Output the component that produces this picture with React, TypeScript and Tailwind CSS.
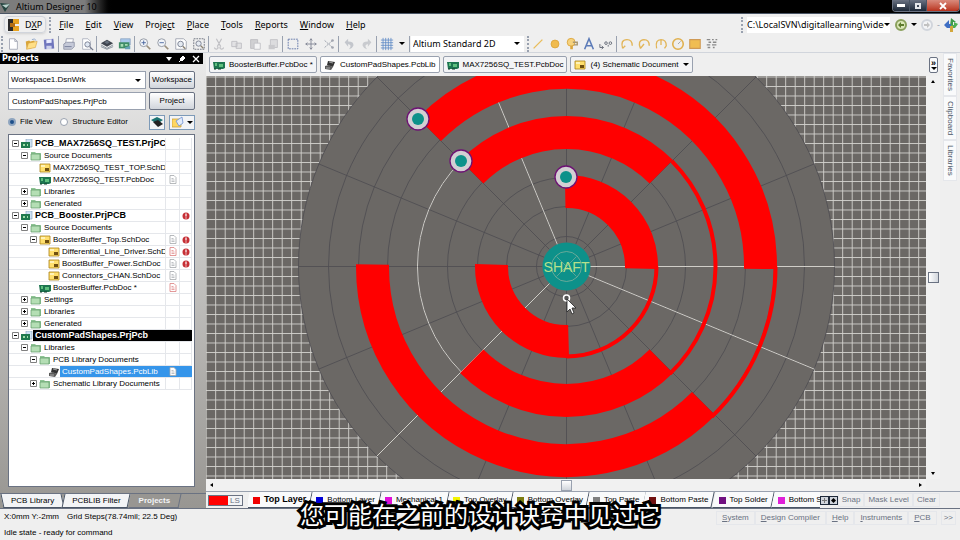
import React from 'react'
import clsx from 'clsx'

type IconName =
  | 'new' | 'open' | 'save' | 'print' | 'preview' | 'layers' | 'board'
  | 'zoomIn' | 'zoomOut' | 'zoomFit' | 'zoomArea'
  | 'cut' | 'copy' | 'paste' | 'stamp'
  | 'marquee' | 'move' | 'clear' | 'undo' | 'redo' | 'grid'
  | 'line' | 'pad' | 'via' | 'text' | 'coord'
  | 'arc1' | 'arc2' | 'arc3' | 'circle' | 'fill' | 'array'

const glyphs: Record<IconName, React.ReactNode> = {
  new: <path d="M4 2h6l3 3v9H4zM10 2v3h3" fill="#fff" stroke="#a3a7b5" />,
  open: (
    <>
      <path d="M2 5l4-1 1 1 5-1v8l-9 2z" fill="#d9a53a" />
      <path d="M5 7l10-2-2 7-10 2z" fill="#ffdf86" stroke="#d9a440" strokeWidth=".7" />
      <path d="M9 3q3-2 5 1" fill="none" stroke="#8aa2c8" />
    </>
  ),
  save: (
    <>
      <path d="M2 3l11-1 1 11-11 1z" fill="#7076bd" />
      <path d="M5 3l6-.5v4L5 7z" fill="#e9ecff" />
      <path d="M5 10h6v4H5z" fill="#cdd1ea" />
    </>
  ),
  print: (
    <>
      <path d="M5 2h8l-1 6H4z" fill="#fff" stroke="#8f94a8" strokeWidth=".8" />
      <path d="M2 8l3-2h9v5l-3 3H2z" fill="#c5c9d8" stroke="#7e8499" strokeWidth=".8" />
      <path d="M3 11h8" stroke="#6f7692" />
    </>
  ),
  preview: (
    <>
      <path d="M3 2h6l3 3v9H3z" fill="#fff" stroke="#9a9fb0" strokeWidth=".8" />
      <circle cx="8.500" cy="8.500" r="3" fill="#dfe7f2" stroke="#73798c" />
      <path d="M11 11l4 4" stroke="#73798c" strokeWidth="1.600" />
    </>
  ),
  layers: (
    <>
      <path d="M1 7l7-4 7 4-7 4z" fill="#3f454f" />
      <path d="M1 9l7 4 7-4M1 11l7 3 7-3" fill="none" stroke="#7f8994" />
      <path d="M5 6l3-2 3 2-3 2z" fill="#67717d" />
    </>
  ),
  board: (
    <>
      <path d="M3 2h11v7H3z" fill="#a9c8ea" stroke="#7894b5" strokeWidth=".7" />
      <path d="M1 6h12v7H1z" fill="#3f8d67" />
      <path d="M3 8h3v3H3zM8 8h3v2H8z" fill="#a7dcb4" />
      <path d="M8 12l6-2v4H8z" fill="#68a3b7" />
    </>
  ),
  zoomIn: (
    <>
      <circle cx="6.500" cy="6.500" r="4.500" fill="#f1f4f8" stroke="#8d929e" />
      <path d="M4 6.500h5M6.500 4v5" stroke="#43609b" />
      <path d="M10 10l4 4" stroke="#9a8f7d" strokeWidth="2" />
    </>
  ),
  zoomOut: (
    <>
      <circle cx="6.500" cy="6.500" r="4.500" fill="#f1f4f8" stroke="#8d929e" />
      <path d="M4 6.500h5" stroke="#43609b" />
      <path d="M10 10l4 4" stroke="#9a8f7d" strokeWidth="2" />
    </>
  ),
  zoomFit: (
    <>
      <path d="M2 2h9l3 3v9H2z" fill="#fff" stroke="#9da1ad" />
      <circle cx="7.500" cy="8" r="3.200" fill="#e5eaf1" stroke="#757c8d" />
      <path d="M10 10.500l3 3" stroke="#8a8170" strokeWidth="1.600" />
    </>
  ),
  zoomArea: (
    <>
      <path d="M2 2h12v12H2z" fill="none" stroke="#666b78" strokeDasharray="2 1" />
      <circle cx="7.500" cy="7.500" r="3" fill="#e5eaf1" stroke="#757c8d" />
      <path d="M10 10l3 3" stroke="#8a8170" strokeWidth="1.600" />
    </>
  ),
  cut: <path d="M5 2l5 9M11 2L6 11M3 12a2 1.500 0 1 0 3-1M10 11a2 1.500 0 1 0 3 1" fill="none" stroke="#bfbfc3" strokeWidth="1.300" />,
  copy: <path d="M2 5h6v6H2zM7 7h6v6H7z" fill="#e2e2e4" stroke="#bdbdc2" />,
  paste: (
    <>
      <path d="M3 3h8v10H3z" fill="#d0d0d3" stroke="#bbbbc0" />
      <path d="M7 7h7v7H7z" fill="#f4f4f5" stroke="#c0c0c5" />
    </>
  ),
  stamp: (
    <>
      <path d="M5 3h8v9H5z" fill="#dcdcde" stroke="#c0c0c5" />
      <path d="M3 9h7v5H3z" fill="#c9c9cc" />
    </>
  ),
  marquee: <path d="M2.500 2.500h11v11h-11z" fill="none" stroke="#5a70a5" strokeDasharray="2 1" />,
  move: <path d="M8 2v12M2 8h12M6.500 4L8 2l1.500 2M6.500 12L8 14l1.500-2M4 6.500L2 8l2 1.500M12 6.500L14 8l-2 1.500" fill="none" stroke="#7d8190" />,
  clear: (
    <>
      <path d="M3 4l9 8M3 12l9-8" stroke="#8d93a0" strokeDasharray="2 1" />
      <circle cx="12" cy="4" r="1.500" fill="#a0a4ae" />
      <circle cx="12" cy="12" r="1.500" fill="#a0a4ae" />
    </>
  ),
  undo: <path d="M3 6l4-4v3q7 0 6 5-1 3-5 4 4-5-1-6v3z" fill="#c3c6cc" />,
  redo: <path d="M13 6L9 2v3q-7 0-6 5 1 3 5 4-4-5 1-6v3z" fill="#c9cbcf" />,
  grid: <path d="M3.500 1v14M6.500 1v14M9.500 1v14M12.500 1v14M1 3.500h14M1 6.500h14M1 9.500h14M1 12.500h14" stroke="#5a87c4" strokeWidth=".9" />,
  line: <path d="M3 13L13 3" stroke="#e9bd5c" strokeWidth="1.600" />,
  pad: <circle cx="8" cy="8" r="4.500" fill="#f0bb4e" stroke="#dba53b" />,
  via: (
    <>
      <circle cx="7" cy="6" r="4.500" fill="#f6d27d" stroke="#dba53b" />
      <path d="M9 6h5v3h-4" fill="none" stroke="#a8966e" strokeWidth="1.600" />
      <path d="M6 10h3v4H6z" fill="#dba53b" />
    </>
  ),
  text: <path d="M3 14L8 2l5 12M5 10h6" fill="none" stroke="#5c7bb8" strokeWidth="1.800" />,
  coord: (
    <>
      <path d="M1 8v4h4M3 10l2 2-2 2" fill="none" stroke="#5c6270" />
      <circle cx="8" cy="7" r="1.500" fill="none" stroke="#5c6270" />
      <circle cx="13" cy="7" r="1.500" fill="none" stroke="#5c6270" />
      <path d="M10.500 9v2" stroke="#5c6270" />
    </>
  ),
  arc1: <path d="M3 13Q0 3 8 3q6 0 6 7M3 13l3-3" fill="none" stroke="#e2b558" strokeWidth="1.600" />,
  arc2: <path d="M4 13Q0 4 8 3q6 0 6 7M4 13l4-5" fill="none" stroke="#e2b558" strokeWidth="1.600" />,
  arc3: <path d="M3 13Q1 3 8 3q6 0 6 7l-2 3M8 3v6" fill="none" stroke="#e2b558" strokeWidth="1.500" />,
  circle: (
    <>
      <circle cx="8" cy="8" r="6" fill="none" stroke="#e0b04e" strokeWidth="1.800" />
      <path d="M8 8l3-3" stroke="#9d9d9d" />
    </>
  ),
  fill: <path d="M2 3h12v10H2z" fill="#f0bd52" stroke="#cf9a55" strokeWidth="1.200" />,
  array: <path d="M2 3h4M8 3h2M12 3h2M4 6h3M9 6h4M2 9h4M8 9h5M3 12h3M9 12h2" stroke="#8a8a8a" strokeWidth="1.600" />,
}

function Icon ({ name }: { name: IconName }) {
  return (
    <svg viewBox="0 0 16 16" className="size-[14px] shrink-0" aria-hidden="true">
      {glyphs[name]}
    </svg>
  )
}

const toolGroups: IconName[][] = [
  ['new', 'open', 'save'],
  ['print', 'preview'],
  ['layers', 'board'],
  ['zoomIn', 'zoomOut', 'zoomFit', 'zoomArea'],
  ['cut', 'copy', 'paste', 'stamp'],
  ['marquee', 'move', 'clear'],
  ['undo', 'redo'],
]

const placeTools: IconName[] = ['line', 'pad', 'via', 'text', 'coord']
const shapeTools: IconName[] = ['arc1', 'arc2', 'arc3', 'circle', 'fill', 'array']

// [before the accelerator, accelerator, after it]
const menus = [
  ['', 'F', 'ile'],
  ['', 'E', 'dit'],
  ['', 'V', 'iew'],
  ['Proje', 'c', 't'],
  ['', 'P', 'lace'],
  ['', 'T', 'ools'],
  ['', 'R', 'eports'],
  ['', 'W', 'indow'],
  ['', 'H', 'elp'],
]

type DocKind = 'project' | 'folder' | 'sch' | 'pcb' | 'lib'

interface TreeRow {
  label: string
  level: number
  kind: DocKind
  open?: boolean
  page?: 'gray' | 'red' | 'white'
  error?: boolean
  active?: boolean
  selected?: boolean
}

const tree: TreeRow[] = [
  { label: 'PCB_MAX7256SQ_TEST.PrjPCB', level: 0, kind: 'project', open: true },
  { label: 'Source Documents', level: 1, kind: 'folder', open: true },
  { label: 'MAX7256SQ_TEST_TOP.SchDoc', level: 2, kind: 'sch' },
  { label: 'MAX7256SQ_TEST.PcbDoc', level: 2, kind: 'pcb', page: 'gray' },
  { label: 'Libraries', level: 1, kind: 'folder', open: false },
  { label: 'Generated', level: 1, kind: 'folder', open: false },
  { label: 'PCB_Booster.PrjPCB', level: 0, kind: 'project', open: true, error: true },
  { label: 'Source Documents', level: 1, kind: 'folder', open: true },
  { label: 'BoosterBuffer_Top.SchDoc', level: 2, kind: 'sch', open: true, page: 'gray', error: true },
  { label: 'Differential_Line_Driver.SchDoc', level: 3, kind: 'sch', page: 'red', error: true },
  { label: 'BoostBuffer_Power.SchDoc', level: 3, kind: 'sch', page: 'gray', error: true },
  { label: 'Connectors_CHAN.SchDoc', level: 3, kind: 'sch', page: 'gray' },
  { label: 'BoosterBuffer.PcbDoc *', level: 2, kind: 'pcb', page: 'red' },
  { label: 'Settings', level: 1, kind: 'folder', open: false },
  { label: 'Libraries', level: 1, kind: 'folder', open: false },
  { label: 'Generated', level: 1, kind: 'folder', open: false },
  { label: 'CustomPadShapes.PrjPcb', level: 0, kind: 'project', open: true, active: true },
  { label: 'Libraries', level: 1, kind: 'folder', open: true },
  { label: 'PCB Library Documents', level: 2, kind: 'folder', open: true },
  { label: 'CustomPadShapes.PcbLib', level: 3, kind: 'lib', page: 'white', selected: true },
  { label: 'Schematic Library Documents', level: 2, kind: 'folder', open: false },
]

const indents = ['pl-[3px]', 'pl-3', 'pl-[21px]', 'pl-[30px]']

const layers = [
  { name: 'Top Layer', swatch: 'bg-[#f00000]', active: true },
  { name: 'Bottom Layer', swatch: 'bg-[#0000d8]' },
  { name: 'Mechanical 1', swatch: 'bg-[#e010d8]' },
  { name: 'Top Overlay', swatch: 'bg-[#f4f400]' },
  { name: 'Bottom Overlay', swatch: 'bg-[#7d7d10]' },
  { name: 'Top Paste', swatch: 'bg-[#808080]' },
  { name: 'Bottom Paste', swatch: 'bg-[#701010]' },
  { name: 'Top Solder', swatch: 'bg-[#701080]' },
  { name: 'Bottom Solder', swatch: 'bg-[#e020d8]' },
]

function DocIcon ({ kind }: { kind: DocKind }) {
  return (
    <svg viewBox="0 0 12 10" className="h-[10px] w-3 shrink-0" aria-hidden="true">
      {kind === 'project' && (
        <>
          <path d="M5 0h6v8H5z" fill="#cfe3f5" stroke="#7d9bb5" strokeWidth=".6" />
          <path d="M0 3h9v6H0z" fill="#1f7a50" />
          <path d="M2 5h2v2H2zM6 5h1v2H6z" fill="#9fe0a8" />
        </>
      )}
      {kind === 'folder' && (
        <>
          <path d="M1 1h4l1 1h5v7H1z" fill="#8fc495" />
          <path d="M1 3h9v6H1z" fill="#b4deb4" stroke="#5d9a66" strokeWidth=".7" />
        </>
      )}
      {kind === 'sch' && (
        <>
          <path d="M1 1h10v8H1z" fill="#ffdf6d" stroke="#a98016" strokeWidth=".8" />
          <path d="M6 5h4v3H6z" fill="#6f4f10" />
          <path d="M2 2h4v2H2z" fill="#fff3b8" />
        </>
      )}
      {kind === 'pcb' && (
        <>
          <path d="M0 2h12v6l-2 1H1z" fill="#1d7550" />
          <path d="M2 3h2v3H2zM6 4h4v3H6z" fill="#5ec07e" />
          <path d="M1 9h2M5 9h3" stroke="#0e3b28" />
        </>
      )}
      {kind === 'lib' && (
        <>
          <path d="M4 1l7 1-2 5-6-2z" fill="#333" />
          <path d="M1 6l4-1 4 2-2 3-6-1z" fill="#5a5a5a" />
          <path d="M2 8h4M5 2l4 1" stroke="#bbb" strokeWidth=".8" />
        </>
      )}
    </svg>
  )
}

function PageMark ({ tone }: { tone: 'gray' | 'red' | 'white' }) {
  const color = tone === 'red' ? '#dc7f7f' : '#a4a8ac'
  return (
    <svg viewBox="0 0 8 9" className="h-[9px] w-2" aria-hidden="true">
      <path d="M1 .5h4l2 2v6H1z" fill="#fff" stroke={color} strokeWidth=".8" />
      <path d="M2.500 3.500h2M2.500 5h3M2.500 6.500h3" stroke={color} strokeWidth=".7" />
    </svg>
  )
}

function Caret () {
  return <span className="size-0 shrink-0 border-x-[3px] border-t-[3px] border-x-transparent border-t-black" />
}

function Grip () {
  return <span className="h-4 w-0 shrink-0 border-l-2 border-dotted border-gray-400" />
}

function Rule () {
  return <span className="h-4 w-px shrink-0 bg-gray-400" />
}

function ToolButton ({ name }: { name: IconName }) {
  return (
    <button type="button" aria-label={name} className="flex w-[17px] shrink-0 items-center justify-center">
      <Icon name={name} />
    </button>
  )
}

function TitleBar () {
  return (
    <header className="flex h-[14px] shrink-0 items-center justify-between border-b border-gray-600 bg-black">
      <div className="flex h-full items-center gap-1 bg-linear-to-r from-[#7c7c7c] from-75% to-black pr-4">
        <svg viewBox="0 0 12 12" className="size-3" aria-hidden="true">
          <path d="M0 2l10 1-5 8z" fill="#24443f" />
          <path d="M2 4l8-1-4 4z" fill="#b9d0cb" />
        </svg>
        <h1 className="font-['Noto_Sans',sans-serif] text-[9px] leading-3 text-black">Altium Designer 10</h1>
      </div>
      <div className="flex h-3 self-start overflow-hidden rounded-b-sm border border-t-0 border-gray-500">
        <button type="button" aria-label="Minimize" className="flex w-[17px] items-center justify-center border-r border-gray-600 bg-linear-to-b from-gray-500 to-gray-800">
          <span className="h-[3px] w-2 bg-white" />
        </button>
        <button type="button" aria-label="Maximize" className="flex w-[17px] items-center justify-center border-r border-gray-600 bg-linear-to-b from-gray-500 to-gray-800">
          <span className="size-[6px] border-2 border-gray-200" />
        </button>
        <button type="button" aria-label="Close" className="flex w-8 items-center justify-center bg-linear-to-b from-[#d98a7c] to-[#b8301a]">
          <svg viewBox="0 0 8 8" className="size-2">
            <path d="M1 1l6 6M7 1L1 7" stroke="#fff" strokeWidth="1.800" />
          </svg>
        </button>
      </div>
    </header>
  )
}

function MenuBar () {
  return (
    <nav className="flex h-[21px] shrink-0 items-center justify-between pr-[2px] pl-1 font-['Noto_Sans',sans-serif] text-[9px]">
      <div className="flex items-center">
        <button type="button" className="flex h-[17px] items-center gap-[5px] rounded-sm border border-gray-300 px-[3px] shadow-sm">
          <svg viewBox="0 0 12 12" className="size-3" aria-hidden="true">
            <path d="M0 0h5v12H0z" fill="#2b2b2b" />
            <path d="M5 0h6v5H5zM5 7h6v5H5z" fill="#e7a320" />
            <path d="M2 4h5v4H2z" fill="#b36e12" />
          </svg>
          <span>D<u>X</u>P</span>
        </button>
        <span className="mr-2 ml-[3px] h-4 border-l-2 border-dotted border-gray-400" />
        <ul className="flex gap-3">
          {menus.map(([pre, key, post]) => (
            <li key={pre + key + post}>
              <button type="button">{pre}<u>{key}</u>{post}</button>
            </li>
          ))}
        </ul>
      </div>
      <div className="flex items-center gap-1">
        <Grip />
        <div className="flex h-4 items-center bg-white">
          <input
            aria-label="Location"
            defaultValue="C:\LocalSVN\digitallearning\videos"
            className="w-[137px] bg-transparent outline-none"
          />
          <Caret />
        </div>
        <button type="button" aria-label="Back" className="ml-px flex size-3 items-center justify-center rounded-full border-2 border-[#8aa05c] bg-[#dbe7b8]">
          <svg viewBox="0 0 8 8" className="size-2"><path d="M1 4l3-3v2h3v2H4v2z" fill="#5d7a2c" /></svg>
        </button>
        <Caret />
        <button type="button" aria-label="Forward" className="flex size-3 items-center justify-center rounded-full border-2 border-gray-300 bg-gray-100">
          <svg viewBox="0 0 8 8" className="size-2"><path d="M7 4L4 1v2H1v2h3v2z" fill="#c2c2c2" /></svg>
        </button>
        <span className="text-gray-400">-</span>
        <button type="button" aria-label="Home" className="size-[14px]">
          <svg viewBox="0 0 14 14">
            <path d="M7 0l5 4H9v4H6z" fill="#3f9a4b" />
            <path d="M0 7l5-5v4h2v4H3z" fill="#3f6fc4" />
            <path d="M14 6l-4-2v3H7v3h4z" fill="#4fae52" />
            <path d="M6 8h3v6H6z" fill="#d3a73c" />
          </svg>
        </button>
      </div>
    </nav>
  )
}

function ToolBar () {
  return (
    <div className="flex h-[18px] shrink-0 items-center gap-px border-b border-gray-300 pl-px">
      <Grip />
      {toolGroups.map((group, idx) => (
        <React.Fragment key={idx}>
          {group.map(name => <ToolButton key={name} name={name} />)}
          <Rule />
        </React.Fragment>
      ))}
      <ToolButton name="grid" />
      <span className="flex w-3 justify-center"><Caret /></span>
      <Rule />
      <div className="flex h-4 items-center bg-white pr-1">
        <select
          aria-label="View configuration"
          className="w-[103px] appearance-none bg-transparent pl-[2px] font-['Noto_Sans',sans-serif] text-[9px] outline-none"
        >
          <option>Altium Standard 2D</option>
        </select>
        <Caret />
      </div>
      <div className="ml-[2px] flex items-center">
        <Grip />
        {placeTools.map(name => <ToolButton key={name} name={name} />)}
        <span className="flex w-1 justify-center"><Rule /></span>
        {shapeTools.map(name => <ToolButton key={name} name={name} />)}
      </div>
    </div>
  )
}

function ProjectTree () {
  return (
    <div className="min-h-0 flex-1 overflow-hidden border border-gray-500 bg-white pt-[3px] pr-[2px]">
      <ul>
        {tree.map((row, idx) => (
          <li key={idx} className="flex h-3 items-stretch border-b border-gray-200">
            <div className={clsx('flex min-w-0 flex-1 items-center', indents[row.level])}>
              <span className="mr-[2px] flex w-[7px] shrink-0">
                {row.open !== undefined && (
                  <svg viewBox="0 0 7 7" className="size-[7px]">
                    <path d="M.5.5h6v6h-6z" fill="#fff" stroke="#808080" />
                    <path d={row.open ? 'M2 3.500h3' : 'M2 3.500h3M3.500 2v3'} stroke="#000" />
                  </svg>
                )}
              </span>
              <DocIcon kind={row.kind} />
              <span
                className={clsx(
                  'h-full min-w-0 flex-1 overflow-hidden pl-[2px] leading-[11px] whitespace-nowrap',
                  row.level === 0 && 'text-[9px] font-bold',
                  row.active && 'bg-black text-white',
                  row.selected && 'bg-[#3595ea] text-white'
                )}
              >
                {row.label}
              </span>
            </div>
            <span
              className={clsx(
                'flex w-[14px] items-center justify-center border-l',
                row.active ? 'border-black bg-black' : row.selected ? 'border-[#3595ea] bg-[#3595ea]' : 'border-gray-200'
              )}
            >
              {row.page && <PageMark tone={row.page} />}
            </span>
            <span
              className={clsx(
                'flex w-[13px] items-center justify-center border-x',
                row.active ? 'border-black bg-black' : row.selected ? 'border-[#3595ea] bg-[#3595ea]' : 'border-gray-200'
              )}
            >
              {row.error && (
                <svg viewBox="0 0 8 8" className="size-2" aria-label="Error">
                  <circle cx="4" cy="4" r="3.500" fill="#c62f35" />
                  <path d="M4 1.500v3M4 5.500v1" stroke="#fff" strokeWidth="1.200" />
                </svg>
              )}
            </span>
          </li>
        ))}
      </ul>
    </div>
  )
}

function ProjectsPanel () {
  return (
    <aside className="flex w-[206px] shrink-0 flex-col bg-linear-to-b from-[#ebebeb] to-[#989692]">
      <div className="mr-[3px] flex h-[11px] shrink-0 items-center justify-between bg-black pr-[3px] pl-[2px] text-white">
        <h2 className="font-['DejaVu_Sans',sans-serif] text-[8px] leading-[11px] font-bold">Projects</h2>
        <div className="flex items-center gap-[6px]">
          <span className="size-0 border-x-[3px] border-t-4 border-x-transparent border-t-white" />
          <svg viewBox="0 0 8 8" className="size-2"><path d="M2 4l3-3 2 2-3 3zM1 7l2-2" fill="#fff" stroke="#fff" /></svg>
          <svg viewBox="0 0 8 8" className="size-2"><path d="M1 1l6 6M7 1L1 7" stroke="#fff" strokeWidth="1.300" /></svg>
        </div>
      </div>
      <div className="flex min-h-0 flex-1 flex-col pt-[7px] pr-[11px] pl-2">
        <div className="grid grid-cols-[1fr_46px] gap-x-[3px] gap-y-[3px]">
          <div className="flex h-[18px] items-center border border-gray-400 bg-white pr-1">
            <select aria-label="Workspace" className="min-w-0 flex-1 appearance-none pl-[2px] outline-none">
              <option>Workspace1.DsnWrk</option>
            </select>
            <Caret />
          </div>
          <button type="button" className="rounded-xs border border-gray-500 bg-linear-to-b from-white to-gray-300">Workspace</button>
          <input aria-label="Project file" defaultValue="CustomPadShapes.PrjPcb" className="h-[18px] min-w-0 border border-gray-400 bg-white pl-[3px] outline-none" />
          <button type="button" className="rounded-xs border border-gray-500 bg-linear-to-b from-white to-gray-300">Project</button>
        </div>
        <div className="flex h-6 items-center whitespace-nowrap">
          <label className="flex items-center gap-1">
            <input type="radio" name="view" defaultChecked className="size-2 appearance-none rounded-full border border-gray-500 bg-white checked:border-2 checked:border-[#8fa5bf] checked:bg-[#1d4f8a]" />
            File View
          </label>
          <label className="ml-2 flex items-center gap-1">
            <input type="radio" name="view" className="size-2 appearance-none rounded-full border border-gray-400 bg-white" />
            Structure Editor
          </label>
          <div className="ml-auto flex gap-1">
            <button type="button" aria-label="Compile" className="flex h-[15px] w-4 items-center justify-center border border-[#7d9ab8] bg-gray-100">
              <svg viewBox="0 0 12 12" className="size-3">
                <path d="M0 4l6-3 6 3-6 4z" fill="#1c7372" />
                <path d="M2 6l5-2 5 4-5 3z" fill="#222" />
              </svg>
            </button>
            <button type="button" aria-label="Options" className="flex h-[15px] w-[26px] items-center justify-center gap-[3px] border border-[#7d9ab8] bg-gray-100">
              <svg viewBox="0 0 12 12" className="size-3">
                <path d="M0 3h9v8H0z" fill="#ffd763" stroke="#c79a2c" strokeWidth=".7" />
                <path d="M4 5l6-4 1 6-4 3z" fill="#e2ebfa" stroke="#6d8fd0" strokeWidth=".8" />
              </svg>
              <Caret />
            </button>
          </div>
        </div>
        <ProjectTree />
      </div>
      <div className="mt-[6px] flex h-[15px] shrink-0 items-center border-t border-gray-500 pl-[2px] whitespace-nowrap">
        <button type="button" className="relative h-full px-[9px]">
          <span className="absolute inset-0 skew-x-12 border-x border-b border-gray-600 bg-gray-100" />
          <span className="relative">PCB Library</span>
        </button>
        <button type="button" className="relative h-full px-[9px]">
          <span className="absolute inset-0 -skew-x-12 border-x border-b border-gray-600 bg-gray-100" />
          <span className="relative">PCBLIB Filter</span>
        </button>
        <button type="button" className="relative h-full px-[9px] font-bold text-gray-100">
          <span className="absolute inset-0 -skew-x-12 border-r border-b border-gray-500 bg-[#989692]" />
          <span className="relative">Projects</span>
        </button>
      </div>
    </aside>
  )
}

function DocTab ({ kind, label, active, menu }: { kind: DocKind, label: string, active?: boolean, menu?: boolean }) {
  return (
    <button
      type="button"
      className={clsx(
        'flex h-[17px] items-center gap-1 rounded-xs border border-gray-400 px-[3px] whitespace-nowrap',
        active ? 'bg-white' : 'bg-gray-100'
      )}
    >
      <DocIcon kind={kind} />
      {label}
      {menu && <Caret />}
    </button>
  )
}

// board geometry, in degrees clockwise from the right
const CX = 360.5
const CY = 190.5

function point (r: number, deg: number) {
  const a = (deg * Math.PI) / 180
  return `${(CX + r * Math.cos(a)).toFixed(2)} ${(CY + r * Math.sin(a)).toFixed(2)}`
}

function arc (r: number, from: number, to: number) {
  return `M${point(r, from)}A${r} ${r} 0 ${to - from > 180 ? 1 : 0} 1 ${point(r, to)}`
}

const rings = [30, 60, 89, 119, 149, 179, 208, 238, 268]
const spokes = Array.from({ length: 16 }, (_, i) => i * 22.5)
const brightSpokes = [0, 22.5, 135, 247.5]

const tracks = [
  { r: 194, from: -135, to: 0.7, width: 33 },
  { r: 194, from: 45, to: 180.6, width: 33 },
  { r: 134, from: -135, to: -45, width: 33 },
  { r: 134, from: 45, to: 135, width: 33 },
  { r: 75, from: -91, to: 1.6, width: 33 },
  { r: 75, from: 88.4, to: 181.5, width: 33 },
  { r: 209, from: 0, to: 46, width: 4 },
  { r: 149, from: -45, to: 46, width: 4 },
  { r: 90, from: 0, to: 90, width: 4 },
]

const pads = [[212, 43], [255, 85], [360, 101]]

function BoardCanvas () {
  return (
    <svg viewBox="0 0 720 403" preserveAspectRatio="xMidYMid slice" className="h-full min-w-0 flex-1 bg-[#6b6865]">
      <defs>
        <pattern id="snap" x="9.200" y="10" width="9.500" height="9.500" patternUnits="userSpaceOnUse">
          <path d="M0 .5h9.500M.5 0v9.500" stroke="#d3d1cd" strokeWidth=".9" />
        </pattern>
      </defs>
      <rect width="720" height="403" fill="url(#snap)" />
      <circle cx={CX} cy={CY} r="268" fill="#6b6865" />
      <g fill="none" stroke="#4d4b50" strokeWidth=".8">
        {rings.map(r => <circle key={r} cx={CX} cy={CY} r={r} />)}
        {spokes.map(deg => <path key={deg} d={`M${point(24, deg)}L${point(268, deg)}`} />)}
      </g>
      <g fill="none" stroke="#d0cec8">
        {brightSpokes.map(deg => <path key={deg} d={`M${point(20, deg)}L${point(268, deg)}`} />)}
        <path d={arc(149, 135, 225)} />
      </g>
      <g fill="none" stroke="#ff0000">
        {tracks.map((t, idx) => <path key={idx} d={arc(t.r, t.from, t.to)} strokeWidth={t.width} />)}
      </g>
      {pads.map(([x, y]) => (
        <g key={x}>
          <circle cx={x} cy={y} r="11" fill="#d3cfd3" stroke="#6d1273" strokeWidth="1.300" />
          <circle cx={x} cy={y} r="6" fill="#0d918a" />
        </g>
      ))}
      <circle cx={CX} cy={CY} r="24" fill="#0d918a" />
      <circle cx={CX} cy={CY} r="15" fill="none" stroke="#7fae9c" strokeWidth=".8" />
      <path d={`M${CX - 10} ${CY - 10}l20 20m0-20l-20 20`} stroke="#7fae9c" strokeWidth=".7" />
      <text x={CX} y={CY + 5} textAnchor="middle" fill="#b5e08c" className="font-['Liberation_Sans',sans-serif] text-[14px]">SHAFT</text>
      <circle cx={CX} cy="222" r="3" fill="#555" stroke="#fff" strokeWidth="1.500" />
      <path d="M361 223v13l3-3 2 5 2-1-2-5h4z" fill="#fff" stroke="#222" strokeWidth=".8" />
    </svg>
  )
}

function LayerTabs () {
  return (
    <div className="flex h-[17px] shrink-0 items-center overflow-hidden border-t border-gray-400">
      <div className="ml-[2px] flex h-[11px] shrink-0 border border-gray-500">
        <span className="w-[19px] bg-[#ff0000]" />
        <span className="w-[14px] bg-gray-100 text-center leading-[10px] text-gray-500">LS</span>
      </div>
      <div className="ml-[5px] flex h-full min-w-0 flex-1 overflow-hidden">
        {layers.map(layer => (
          <button
            key={layer.name}
            type="button"
            className={clsx('relative flex h-full shrink-0 items-center gap-1 px-[5px] whitespace-nowrap', layer.active && 'text-[9px] font-bold')}
          >
            <span className="absolute inset-0 -skew-x-12 border-r border-b border-gray-600 bg-gray-50" />
            <span className={clsx('relative size-[7px]', layer.swatch)} />
            <span className="relative">{layer.name}</span>
          </button>
        ))}
      </div>
      <div className="flex shrink-0">
        <button type="button" aria-label="Previous layers" className="flex size-[9px] items-center justify-center border border-gray-800 bg-gray-300">
          <svg viewBox="0 0 5 5" className="size-[5px]"><path d="M0 2.500h5M2.500 0v5" stroke="#777" /></svg>
        </button>
        <button type="button" aria-label="Next layers" className="flex size-[9px] items-center justify-center border border-gray-800 bg-gray-300">
          <svg viewBox="0 0 5 5" className="size-[5px]"><path d="M2.500 0L5 2.500 2.500 5 0 2.500z" fill="#000" /></svg>
        </button>
      </div>
      <div className="flex shrink-0 pr-5 text-gray-500">
        <button type="button" className="border border-gray-200 px-[3px] leading-3">Snap</button>
        <button type="button" className="border border-gray-200 px-[3px] leading-3">Mask Level</button>
        <button type="button" className="border border-gray-200 px-[3px] leading-3">Clear</button>
      </div>
    </div>
  )
}

function Workbench () {
  return (
    <main className="flex min-w-0 flex-1 flex-col">
      <div className="flex min-h-0 flex-1">
        <div className="flex min-w-0 flex-1 flex-col">
          <div className="flex h-[23px] shrink-0 items-center justify-between pr-[2px] pl-[3px]">
            <div className="flex gap-[3px]">
              <DocTab kind="pcb" label="BoosterBuffer.PcbDoc *" />
              <DocTab kind="lib" label="CustomPadShapes.PcbLib" active />
              <DocTab kind="pcb" label="MAX7256SQ_TEST.PcbDoc" />
              <DocTab kind="sch" label="(4) Schematic Document" menu />
            </div>
            <button type="button" aria-label="More documents" className="flex h-4 w-[9px] flex-col items-center justify-center rounded-xs border border-gray-500 bg-gray-50 text-[9px] leading-2 font-bold">
              »
              <Caret />
            </button>
          </div>
          <div className="flex min-h-0 flex-1">
            <BoardCanvas />
            <div className="flex w-[14px] shrink-0 flex-col items-center justify-between bg-[#f1f1f1] py-1">
              <span className="size-0 border-x-2 border-b-[3px] border-x-transparent border-b-black" />
              <span className="size-[11px] border border-gray-500 bg-linear-to-r from-white to-gray-300" />
              <span className="size-0 border-x-2 border-t-[3px] border-x-transparent border-t-black" />
            </div>
          </div>
          <div className="mr-[14px] flex h-3 shrink-0 items-center justify-between bg-[#f1f1f1] px-1">
            <span className="size-0 border-y-2 border-r-[3px] border-y-transparent border-r-black" />
            <span className="size-[11px] border border-gray-400 bg-linear-to-b from-white to-gray-300" />
            <span className="size-0 border-y-2 border-l-[3px] border-y-transparent border-l-black" />
          </div>
        </div>
        <div className="flex w-5 shrink-0 flex-col items-center text-gray-600">
          {['Favorites', 'Clipboard', 'Libraries'].map(name => (
            <button key={name} type="button" className="w-[14px] border border-gray-200 bg-gray-50 pt-1 pb-1 leading-3 [writing-mode:vertical-rl]">
              {name}
            </button>
          ))}
        </div>
      </div>
      <LayerTabs />
    </main>
  )
}

function StatusBar () {
  return (
    <footer className="flex h-8 shrink-0 items-start justify-between border-t border-gray-500 pr-1 pl-1">
      <div className="leading-4">
        <p className="flex gap-2"><span>X:0mm Y:-2mm</span><span>Grid Steps(78.74mil; 22.5 Deg)</span></p>
        <p>Idle state - ready for command</p>
      </div>
      <div className="mt-[2px] flex text-gray-500">
        {['System', 'Design Compiler', 'Help', 'Instruments', 'PCB'].map(name => (
          <button key={name} type="button" className="border border-gray-200 px-[5px] leading-3">
            <u>{name[0]}</u>{name.slice(1)}
          </button>
        ))}
        <button type="button" className="ml-1 border border-gray-200 px-[2px] leading-3">&gt;&gt;</button>
      </div>
    </footer>
  )
}

export default function App () {
  return (
    <div className="relative flex h-screen flex-col overflow-hidden bg-[#efefef] font-['Liberation_Sans',sans-serif] text-[8px] text-black">
      <TitleBar />
      <MenuBar />
      <ToolBar />
      <div className="flex min-h-0 flex-1">
        <ProjectsPanel />
        <Workbench />
      </div>
      <StatusBar />
      <p
        lang="zh"
        className="pointer-events-none absolute inset-x-0 bottom-[10px] text-center font-['Noto_Sans_CJK_SC',sans-serif] text-[24px] leading-8 text-white [paint-order:stroke] [-webkit-text-stroke:6px_black]"
      >
        您可能在之前的设计诀窍中见过它
      </p>
    </div>
  )
}
